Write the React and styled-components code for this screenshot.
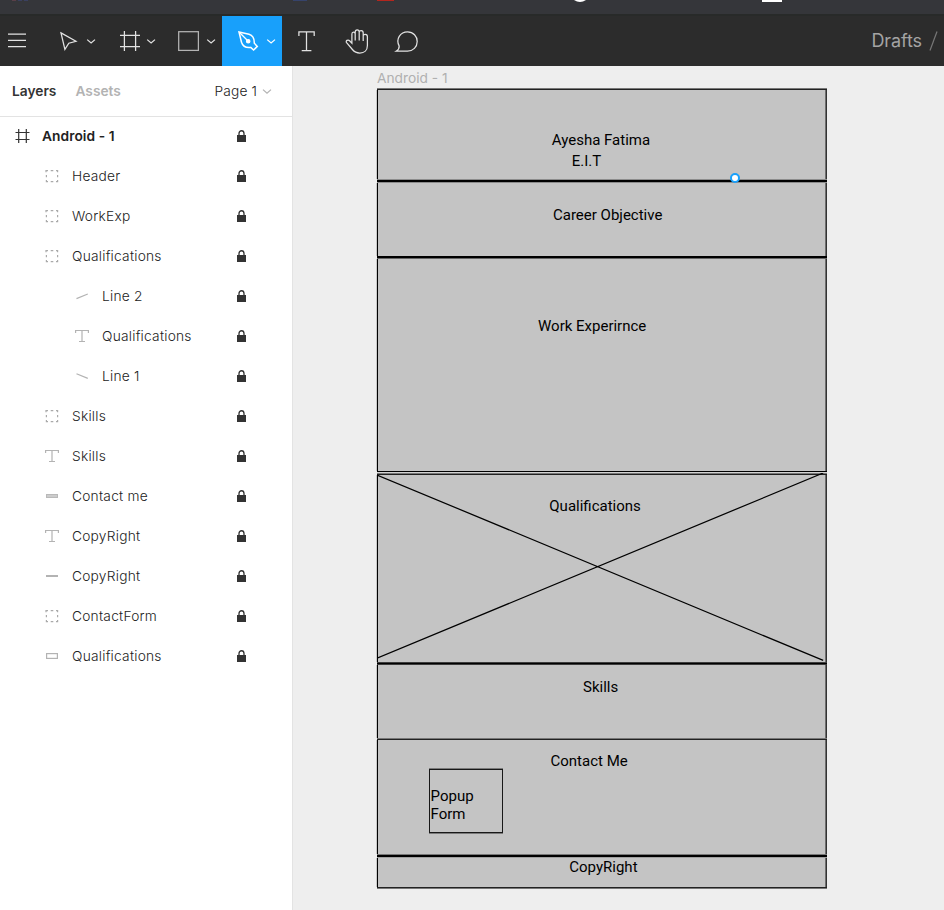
import React from "react";
import styled, { createGlobalStyle, css } from "styled-components";

const GlobalStyle = createGlobalStyle`
  *, *::before, *::after { box-sizing: border-box; }
  html, body { margin: 0; padding: 0; background: #eeeeee; }
  body { overflow: hidden; font-family: "Inter", "Liberation Sans", sans-serif; }
  svg { display: block; flex: none; }
`;

const Window = styled.div`
  width: 944px;
  height: 910px;
  display: flex;
  flex-direction: column;
  overflow: hidden;
`;

/* ---------- browser strip ---------- */

const BrowserStrip = styled.div`
  height: 16px;
  flex: none;
  background: #35363a;
  border-bottom: 2px solid #282a29;
`;

/* ---------- toolbar ---------- */

const Toolbar = styled.header`
  height: 50px;
  flex: none;
  display: flex;
  align-items: stretch;
  background: #2c2c2c;
  color: #e2e2e2;
`;

const Tool = styled.button`
  appearance: none;
  border: 0;
  padding: 0;
  margin: 0;
  flex: none;
  width: ${(p) => p.$width}px;
  display: flex;
  color: ${(p) => (p.$active ? "#ffffff" : "inherit")};
  background: ${(p) => (p.$active ? "#18a0fb" : "transparent")};
`;

const Breadcrumb = styled.div`
  margin-left: auto;
  padding: 0 6px 1px 0;
  display: flex;
  align-items: center;
  gap: 7px;
  font-size: 18px;
  letter-spacing: -0.1px;
  color: #a4a4a4;
`;

const ToolSvg = ({ width = 40, children }) => (
  <svg width={width} height="50" viewBox={`0 0 ${width} 50`} fill="none" stroke="currentColor" strokeWidth="1.25">
    {children}
  </svg>
);

const ToolChevron = () => (
  <ToolSvg width={20}>
    <path d="M5.2 23.6 L9.1 27 L13 23.6" />
  </ToolSvg>
);

const MenuIcon = () => (
  <ToolSvg width={42}>
    <path d="M8 18H26M8 24.4H26M8 30.6H26" />
  </ToolSvg>
);

const MoveIcon = () => (
  <ToolSvg>
    <path d="M19 16.9 L34 25.3 L26.8 27.2 L22.9 33.4 Z" />
  </ToolSvg>
);

const FrameIcon = () => (
  <ToolSvg>
    <path d="M22.4 15V35M33.6 15V35M18 19.3H38M18 30.5H38" />
  </ToolSvg>
);

const RectIcon = () => (
  <ToolSvg>
    <rect x="16.7" y="15.7" width="19.7" height="18.7" stroke="#b4b4b4" />
  </ToolSvg>
);

const PenIcon = () => (
  <ToolSvg>
    <path d="M17 16 L27 18.3 C30.5 19.3 32.4 22.6 32.3 27.2 L35.3 30.4 L31.6 34 L28.7 31.4 C23.6 32 20.6 29.8 19.5 26.2 Z" strokeWidth="1.5" />
    <path d="M17.3 16.3 L26 25" />
    <circle cx="26.2" cy="25.2" r="1.7" fill="currentColor" />
  </ToolSvg>
);

const TextIcon = () => (
  <ToolSvg width={50}>
    <path d="M16.9 20V15.8H32.2V20M24.5 15.8V34.5M19.7 34.5H29.4" />
  </ToolSvg>
);

const HandIcon = () => (
  <ToolSvg width={50}>
    <path d="M19.9 27.2V18.1C19.9 15.5 23.2 15.4 23.2 18.1V24.5V16.1C23.2 13 27.2 13 27.2 16.1V24.5V16.3C27.2 14 31.2 13.9 31.2 17V25V20C31.2 17.9 35.4 17.8 35.4 20.7V29.4C35.4 34.3 32.2 37 27.8 37C24.3 37 22.4 35.9 20.4 33.5L14.6 26.6C13.2 24.8 16 23.1 17.8 25L19.9 27.2Z" />
  </ToolSvg>
);

const CommentIcon = () => (
  <ToolSvg width={50}>
    <path d="M17.2 30.1C13.4 23 18.3 15.9 25.6 15.9C31.3 15.9 35.2 20.4 35.2 25.5C35.2 31 31 35.1 25.5 35.1H14.4C16.3 34 17.3 32.6 17.2 30.1Z" />
  </ToolSvg>
);

const Slash = () => (
  <svg width="9" height="22" viewBox="0 0 9 22" stroke="#777777" strokeWidth="1.2">
    <path d="M1 20.5 L8 1.5" />
  </svg>
);

/* ---------- layers panel ---------- */

const Body = styled.main`
  flex: 1;
  min-height: 0;
  display: flex;
`;

const Panel = styled.aside`
  width: 293px;
  flex: none;
  background: #ffffff;
  border-right: 1px solid #e3e3e3;
`;

const PanelTabs = styled.div`
  height: 50px;
  display: flex;
  align-items: center;
  padding: 0 20px 0 12px;
  box-shadow: 0 1px 0 #e3e3e3;
`;

const Tab = styled.span`
  margin-right: 19px;
  font-size: 13.75px;
  font-weight: 600;
  color: ${(p) => (p.$active ? "#333333" : "#b3b3b3")};
`;

const PagePicker = styled.span`
  margin-left: auto;
  display: flex;
  align-items: center;
  gap: 5px;
  font-size: 13.75px;
  font-weight: 300;
  letter-spacing: 0.12px;
  color: #222222;
`;

const LayerList = styled.ul`
  list-style: none;
  margin: 0;
  padding: 0;
`;

const LayerRow = styled.li`
  height: 40px;
  display: flex;
  align-items: center;
  padding-left: ${(p) => 12 + p.$depth * 30}px;
  padding-right: 45px;
  font-size: 13.75px;
  letter-spacing: ${(p) => (p.$depth === 0 ? 0.07 : 0.23)}px;
  font-weight: ${(p) => (p.$depth === 0 ? 600 : 300)};
  color: #222222;
`;

const LayerName = styled.span`
  flex: 1;
  margin-left: 10px;
`;

const layerShapes = {
  frame: <path d="M6.7 3V17M14.3 3V17M3.5 6.5H17.5M3.5 13.5H17.5" stroke="#333333" />,
  group: (
    <path
      stroke="#aaaaaa"
      strokeWidth="1.2"
      d="M4 6.2V4.6H6M8.7 4.6H11.3M14 4.6H15.6V6.2M15.6 9V11.2M15.6 14V15.6H14M11.3 15.6H8.7M6 15.6H4.4V14M4.4 11.2V9"
    />
  ),
  lineUp: <path d="M4.5 12.6 L15.8 8" stroke="#b3b3b3" />,
  lineDown: <path d="M4.5 7.8 L15.8 12.4" stroke="#b3b3b3" />,
  text: <path d="M3.6 7V4.5H16.4V7M10 4.5V15.5M7 15.5H13" stroke="#b3b3b3" />,
  bar: (
    <>
      <path d="M4 10H16" stroke="#b9b9b9" strokeWidth="4" />
      <path d="M5 10H15" stroke="#cccccc" strokeWidth="2" />
    </>
  ),
  thin: <path d="M4 10H16" stroke="#b3b3b3" strokeWidth="2" />,
  rect: <rect x="4.6" y="7.6" width="10.8" height="4.8" stroke="#b3b3b3" />,
};

const LayerIcon = ({ type }) => (
  <svg width="20" height="20" viewBox="0 0 20 20" fill="none" strokeWidth="1.2">
    {layerShapes[type]}
  </svg>
);

const LockIcon = () => (
  <svg width="10" height="12" viewBox="0 0 10 12">
    <path d="M2 5.5V3.5C2 -0.2 7 -0.2 7 3.5V5.5" fill="none" stroke="#333333" strokeWidth="1.3" />
    <rect x="0" y="5" width="9" height="7" fill="#333333" />
  </svg>
);

const layers = [
  ["frame", "Android - 1", 0],
  ["group", "Header", 1],
  ["group", "WorkExp", 1],
  ["group", "Qualifications", 1],
  ["lineUp", "Line 2", 2],
  ["text", "Qualifications", 2],
  ["lineDown", "Line 1", 2],
  ["group", "Skills", 1],
  ["text", "Skills", 1],
  ["bar", "Contact me", 1],
  ["text", "CopyRight", 1],
  ["thin", "CopyRight", 1],
  ["group", "ContactForm", 1],
  ["rect", "Qualifications", 1],
];

/* ---------- canvas ---------- */

const Canvas = styled.section`
  flex: 1;
  background: #eeeeee;
  padding: 3px 0 0 83px;
`;

const FrameLabel = styled.div`
  height: 19px;
  padding-left: 1px;
  font-size: 13.75px;
  line-height: 18px;
  letter-spacing: 0;
  color: #b0b0b0;
`;

const Wireframe = styled.div`
  width: 451px;
  display: flex;
  flex-direction: column;
  font-family: "Roboto", sans-serif;
  font-size: 15px;
  line-height: 18px;
  color: #000000;
`;

const Block = styled.div`
  position: relative;
  height: ${(p) => p.$height}px;
  padding-top: ${(p) => p.$top || 0}px;
  background: #c4c4c4;
  border: solid;
  border-width: 0 1px 0 1px;
  border-color: #bdbdbd #333333 #bdbdbd #c8c8c8;
  box-shadow: inset 1px 0 0 #000000, inset -1px 0 0 #6e6e6e;
`;

const edge = css`
  height: ${(p) => p.$rows.length}px;
  background: linear-gradient(
    to bottom,
    ${(p) => p.$rows.map((c, i) => `${c} ${i}px ${i + 1}px`).join(", ")}
  );
`;

const Rule = styled.div`
  flex: none;
  margin-left: 1px;
  ${edge}
`;

const Caption = styled.div`
  padding-left: ${(p) => p.$indent}px;
  height: ${(p) => p.$height || 18}px;
  white-space: nowrap;
`;

const Cross = styled.svg`
  position: absolute;
  left: 0;
  top: -2px;
`;

const Anchor = styled.span`
  position: absolute;
  left: 353px;
  bottom: -4px;
  width: 10px;
  height: 10px;
  border-radius: 50%;
  border: 2px solid #18a0fb;
  background: #ffffff;
  z-index: 1;
`;

const PopupForm = styled.div`
  width: 74px;
  height: 64px;
  margin: -1px 0 0 52px;
  padding: 18px 0 0 0.6px;
  border: 1px solid #181818;
  box-shadow: 0 -1px 0 #7a7a7a, 0 1px 0 #7a7a7a;
  line-height: 17.5px;
`;

export default function App() {
  return (
    <Window>
      <GlobalStyle />
      <BrowserStrip>
        <svg width="944" height="14" viewBox="0 0 944 14">
          <rect x="12" width="4" height="1" fill="#5a3f48" />
          <rect x="18" width="4" height="1" fill="#3a4060" />
          <rect x="24" width="4" height="1" fill="#3a4060" />
          <rect x="293" width="14" height="1" fill="#36436b" />
          <rect x="377" width="17" height="1" fill="#b3261e" />
          <path d="M574 0H586Q580 4 574 0Z" fill="#ffffff" />
          <rect x="762" width="20" height="2" fill="#ffffff" />
        </svg>
      </BrowserStrip>

      <Toolbar>
        <Tool $width={42}><MenuIcon /></Tool>
        <Tool $width={60}><MoveIcon /><ToolChevron /></Tool>
        <Tool $width={60}><FrameIcon /><ToolChevron /></Tool>
        <Tool $width={60}><RectIcon /><ToolChevron /></Tool>
        <Tool $width={60} $active><PenIcon /><ToolChevron /></Tool>
        <Tool $width={50}><TextIcon /></Tool>
        <Tool $width={50}><HandIcon /></Tool>
        <Tool $width={50}><CommentIcon /></Tool>
        <Breadcrumb>Drafts<Slash /></Breadcrumb>
      </Toolbar>

      <Body>
        <Panel>
          <PanelTabs>
            <Tab $active>Layers</Tab>
            <Tab>Assets</Tab>
            <PagePicker>
              Page 1
              <svg width="10" height="10" viewBox="0 0 10 10" fill="none" stroke="#b3b3b3" strokeWidth="1.25">
                <path d="M1 3.6 L5 7.2 L9 3.6" />
              </svg>
            </PagePicker>
          </PanelTabs>
          <LayerList>
            {layers.map(([type, name, depth], i) => (
              <LayerRow key={i} $depth={depth}>
                <LayerIcon type={type} />
                <LayerName>{name}</LayerName>
                <LockIcon />
              </LayerRow>
            ))}
          </LayerList>
        </Panel>

        <Canvas>
          <FrameLabel>Android - 1</FrameLabel>
          <Wireframe>
            <Rule $rows={["#777777", "#222222"]} />
            <Block $height={89} $top={41}>
              <Caption $indent={174.8} $height={21}>Ayesha Fatima</Caption>
              <Caption $indent={194.8}>E.I.T</Caption>
              <Anchor />
            </Block>
            <Rule $rows={["#8c8c8c", "#000000", "#000000", "#8c8c8c"]} />
            <Block $height={73} $top={23}>
              <Caption $indent={176}>Career Objective</Caption>
            </Block>
            <Rule $rows={["#000000", "#000000", "#666666"]} />
            <Block $height={212} $top={58}>
              <Caption $indent={161}>Work Experirnce</Caption>
            </Block>
            <Rule $rows={["#000000", "#d2d2d2", "#777777", "#222222"]} />
            <Block $height={187} $top={22}>
              <Caption $indent={172.3}>Qualifications</Caption>
              <Cross width="449" height="190" viewBox="0 0 449 190" stroke="#000000" strokeWidth="1.25">
                <path d="M0 2 L446.2 187.4M0 185.2 L446.2 0" />
              </Cross>
            </Block>
            <Rule $rows={["#3c3c3c", "#000000", "#3c3c3c"]} />
            <Block $height={73} $top={13}>
              <Caption $indent={206}>Skills</Caption>
            </Block>
            <Rule $rows={["#777777", "#222222"]} />
            <Block $height={114} $top={12}>
              <Caption $indent={173.5}>Contact Me</Caption>
              <PopupForm>Popup<br />Form</PopupForm>
            </Block>
            <Rule $rows={["#777777", "#000000", "#000000", "#a0a0a0"]} />
            <Block $height={29} $top={0}>
              <Caption $indent={192.3}>CopyRight</Caption>
            </Block>
            <Rule $rows={["#222222", "#777777"]} />
          </Wireframe>
        </Canvas>
      </Body>
    </Window>
  );
}
